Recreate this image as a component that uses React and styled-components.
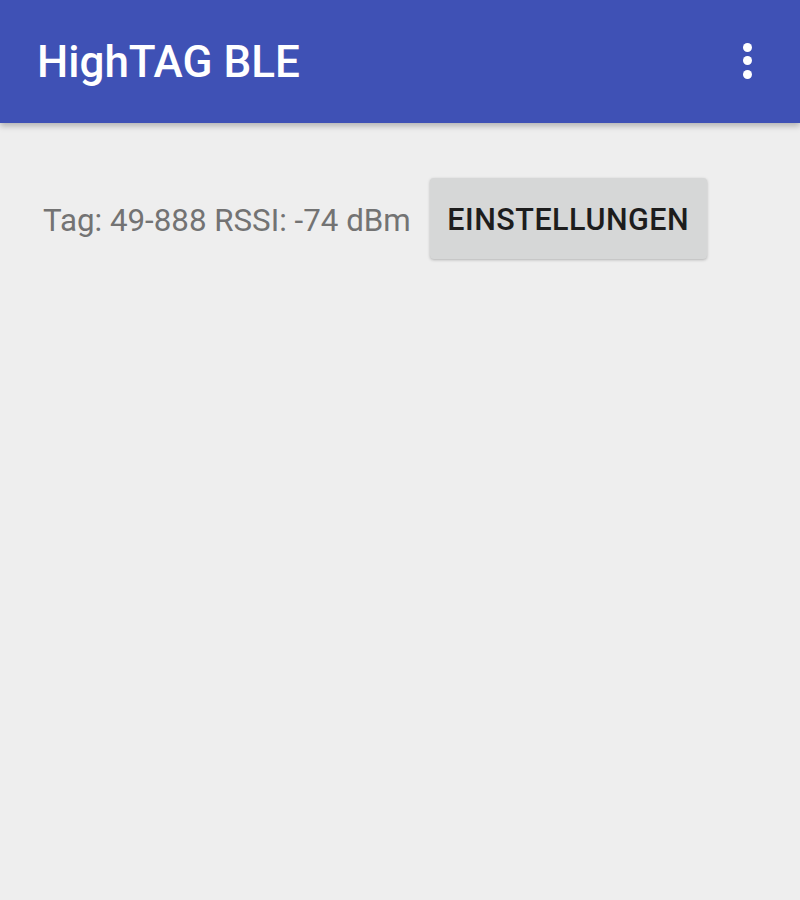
import React from 'react';
import styled, { createGlobalStyle } from 'styled-components';

const Global = createGlobalStyle`
  body {
    margin: 0;
    background: #eeeeee;
    font-family: Roboto, "Noto Sans", sans-serif;
  }
`;

const Page = styled.div`
  width: 800px;
  height: 900px;
  background: #eeeeee;
  display: flex;
  flex-direction: column;
`;

const Toolbar = styled.div`
  height: 123px;
  background: #3f51b5;
  display: flex;
  align-items: center;
  justify-content: space-between;
  padding: 0 48px 0 37px;
  box-shadow: 0 3px 6px rgba(0, 0, 0, 0.25);
  position: relative;
  z-index: 1;
`;

const Title = styled.h1`
  margin: 0;
  color: #ffffff;
  font-size: 44px;
  font-weight: 500;
  letter-spacing: 0;
`;

const Overflow = styled.div`
  display: flex;
  flex-direction: column;
  gap: 4.5px;
  margin-top: -2px;

  span {
    width: 9px;
    height: 9px;
    border-radius: 50%;
    background: #ffffff;
  }
`;

const Row = styled.div`
  display: flex;
  align-items: center;
  padding: 55px 0 0 43px;
  gap: 19px;
`;

const Label = styled.span`
  color: #737373;
  font-size: 31.3px;
  margin-top: 3px;
`;

const Button = styled.button`
  width: 277px;
  height: 81px;
  border: none;
  border-radius: 4px;
  background: #d6d7d7;
  color: #1d1d1d;
  font-family: Roboto, "Noto Sans", sans-serif;
  font-size: 30.5px;
  font-weight: 500;
  letter-spacing: 0.5px;
  box-shadow: 0 1px 3px rgba(0, 0, 0, 0.25);
  padding: 2px 0 0;
`;

export default function App() {
  return (
    <Page>
      <Global />
      <Toolbar>
        <Title>HighTAG BLE</Title>
        <Overflow>
          <span />
          <span />
          <span />
        </Overflow>
      </Toolbar>
      <Row>
        <Label>Tag: 49-888 RSSI: -74 dBm</Label>
        <Button>EINSTELLUNGEN</Button>
      </Row>
    </Page>
  );
}
